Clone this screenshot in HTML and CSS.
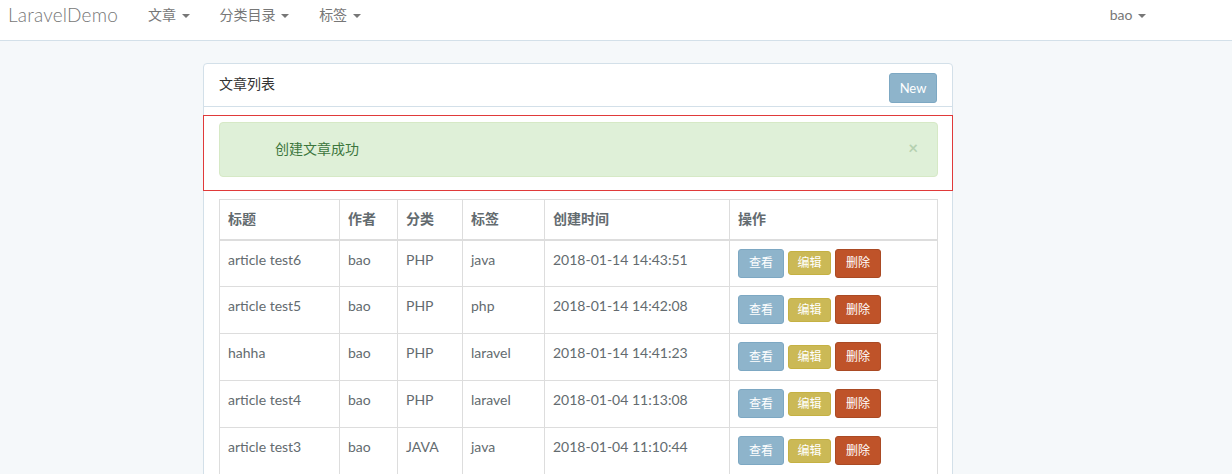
FILE: index.html
```html
<!DOCTYPE html>
<html lang="zh">
<head>
<meta charset="utf-8">
<title>LaravelDemo</title>
<link rel="stylesheet" href="styles.css">
</head>
<body>
<nav class="navbar">
  <a class="brand">LaravelDemo</a>
  <ul class="menu">
    <li>文章 <span class="caret"></span></li>
    <li>分类目录 <span class="caret"></span></li>
    <li>标签 <span class="caret"></span></li>
  </ul>
  <ul class="menu right">
    <li>bao <span class="caret"></span></li>
  </ul>
</nav>
<main class="page">
  <section class="panel">
    <header class="panel-heading">
      <span class="title">文章列表</span>
      <button class="btn btn-info btn-new">New</button>
    </header>
    <div class="flash">
      <div class="alert">
        <span>创建文章成功</span>
        <span class="close">×</span>
      </div>
    </div>
    <div class="panel-body">
      <table class="table">
        <colgroup>
          <col class="c1"><col class="c2"><col class="c3"><col class="c4"><col class="c5"><col class="c6">
        </colgroup>
        <thead>
          <tr><th>标题</th><th>作者</th><th>分类</th><th>标签</th><th>创建时间</th><th>操作</th></tr>
        </thead>
        <tbody>
          <tr><td>article test6</td><td>bao</td><td>PHP</td><td>java</td><td>2018-01-14 14:43:51</td><td class="ops"><button class="btn btn-sm btn-info">查看</button><button class="btn btn-xs btn-warning">编辑</button><button class="btn btn-sm btn-danger">删除</button></td></tr>
          <tr><td>article test5</td><td>bao</td><td>PHP</td><td>php</td><td>2018-01-14 14:42:08</td><td class="ops"><button class="btn btn-sm btn-info">查看</button><button class="btn btn-xs btn-warning">编辑</button><button class="btn btn-sm btn-danger">删除</button></td></tr>
          <tr><td>hahha</td><td>bao</td><td>PHP</td><td>laravel</td><td>2018-01-14 14:41:23</td><td class="ops"><button class="btn btn-sm btn-info">查看</button><button class="btn btn-xs btn-warning">编辑</button><button class="btn btn-sm btn-danger">删除</button></td></tr>
          <tr><td>article test4</td><td>bao</td><td>PHP</td><td>laravel</td><td>2018-01-04 11:13:08</td><td class="ops"><button class="btn btn-sm btn-info">查看</button><button class="btn btn-xs btn-warning">编辑</button><button class="btn btn-sm btn-danger">删除</button></td></tr>
          <tr><td>article test3</td><td>bao</td><td>JAVA</td><td>java</td><td>2018-01-04 11:10:44</td><td class="ops"><button class="btn btn-sm btn-info">查看</button><button class="btn btn-xs btn-warning">编辑</button><button class="btn btn-sm btn-danger">删除</button></td></tr>
        </tbody>
      </table>
    </div>
  </section>
</main>
</body>
</html>
```
FILE: styles.css
```css
* { box-sizing: border-box; }
html, body { margin: 0; padding: 0; }
body {
  background: #f5f8fa;
  font-family: "Lato", "Open Sans", "Noto Sans CJK SC", sans-serif;
  font-size: 14px;
  line-height: 1.6;
  color: #636b6f;
  overflow: hidden;
}
.navbar {
  height: 41px;
  background: #fff;
  border-bottom: 1px solid #d3e0e9;
  display: flex;
  align-items: flex-start;
  padding: 3px 0 0 8px;
}
.brand {
  font-size: 19px;
  line-height: 24px;
  color: #777;
  margin-right: 30px;
  font-weight: 300;
  letter-spacing: 0.2px;
  font-family: "Lato", "Noto Sans CJK SC", sans-serif;
}
.menu {
  list-style: none;
  margin: 0;
  padding: 0;
  display: flex;
  gap: 30px;
}
.menu li {
  color: #777;
  line-height: 24px;
  font-size: 14px;
}
.menu.right { margin-left: auto; margin-right: 86px; }
.caret {
  display: inline-block;
  width: 0;
  height: 0;
  margin-left: 2px;
  vertical-align: middle;
  border-top: 4px solid #777;
  border-left: 4px solid transparent;
  border-right: 4px solid transparent;
}
.page {
  padding: 22px 0 0 203px;
}
.panel {
  width: 750px;
  background: #fff;
  border: 1px solid #d3e0e9;
  border-radius: 4px;
  min-height: 500px;
}
.panel-heading {
  height: 43px;
  border-bottom: 1px solid #d3e0e9;
  display: flex;
  align-items: center;
  justify-content: space-between;
  padding: 0 15px 0 15px;
}
.panel-heading .title {
  color: #333;
  font-size: 14px;
  margin-top: -1px;
}
.btn {
  font-family: "Lato", "Noto Sans CJK SC", sans-serif;
  border-radius: 3px;
  color: #fff;
  border: 1px solid transparent;
  font-size: 12px;
  line-height: 18px;
  cursor: pointer;
  padding: 0;
}
.btn-info { background: #8eb4cb; border-color: #7da8c3; }
.btn-warning { background: #cbb956; border-color: #c5b143; }
.btn-danger { background: #bf5329; border-color: #aa4a24; }
.btn-new {
  width: 48px;
  height: 30px;
  font-size: 13px;
  margin-top: 5px;
}
.flash {
  margin: 8px -1px 0;
  border: 1px solid #e03a3a;
  padding: 6px 14px 13px 15px;
}
.alert {
  background: #dff0d8;
  border: 1px solid #d6e9c6;
  border-radius: 4px;
  color: #3c763d;
  height: 55px;
  padding: 0 19px 0 55px;
  display: flex;
  align-items: center;
  justify-content: space-between;
}
.close {
  color: #3c763d;
  opacity: 0.25;
  font-weight: bold;
  font-size: 17px;
  line-height: 1;
  margin-top: -4px;
}
.panel-body {
  padding: 8px 14px 0 15px;
}
.table {
  width: 718px;
  border-collapse: collapse;
  table-layout: fixed;
}
col.c1 { width: 120px; }
col.c2 { width: 58px; }
col.c3 { width: 65px; }
col.c4 { width: 82px; }
col.c5 { width: 185px; }
col.c6 { width: 208px; }
.table th, .table td {
  border: 1px solid #ddd;
  padding: 8px;
  text-align: left;
  vertical-align: top;
  line-height: 22px;
}
.table th {
  height: 40px;
  font-weight: bold;
  border-bottom: 2px solid #ddd;
}
.table td { height: 47px; }
.table td.ops {
  padding-top: 8px;
  padding-bottom: 0;
}
.ops { white-space: nowrap; }
.ops .btn { vertical-align: middle; margin-right: 4px; }
.btn-sm { width: 46px; height: 29px; font-size: 12px; }
.btn-xs { width: 43px; height: 24px; font-size: 12px; }
```
